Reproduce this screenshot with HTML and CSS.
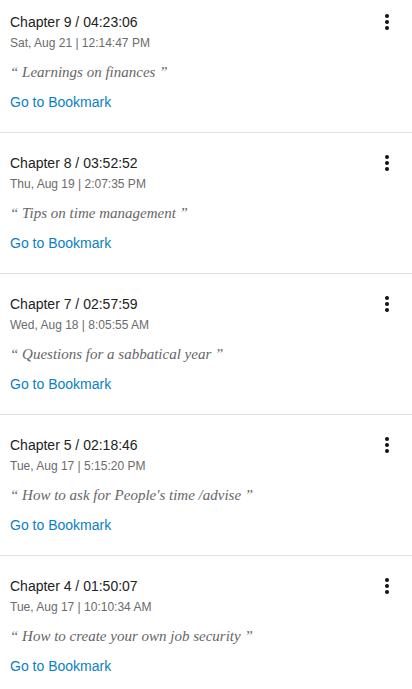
FILE: index.html
```html
<!DOCTYPE html>
<html>
<head>
<meta charset="utf-8">
<link rel="stylesheet" href="styles.css">
</head>
<body>
<ul class="list">
  <li class="item">
    <div class="head">
      <div class="title">Chapter 9 / 04:23:06</div>
      <button class="more" aria-label="More"><span></span><span></span><span></span></button>
    </div>
    <div class="date">Sat, Aug 21 | 12:14:47 PM</div>
    <div class="quote">“ Learnings on finances ”</div>
    <a class="link" href="#">Go to Bookmark</a>
  </li>
  <li class="item">
    <div class="head">
      <div class="title">Chapter 8 / 03:52:52</div>
      <button class="more" aria-label="More"><span></span><span></span><span></span></button>
    </div>
    <div class="date">Thu, Aug 19 | 2:07:35 PM</div>
    <div class="quote">“ Tips on time management ”</div>
    <a class="link" href="#">Go to Bookmark</a>
  </li>
  <li class="item">
    <div class="head">
      <div class="title">Chapter 7 / 02:57:59</div>
      <button class="more" aria-label="More"><span></span><span></span><span></span></button>
    </div>
    <div class="date">Wed, Aug 18 | 8:05:55 AM</div>
    <div class="quote">“ Questions for a sabbatical year ”</div>
    <a class="link" href="#">Go to Bookmark</a>
  </li>
  <li class="item">
    <div class="head">
      <div class="title">Chapter 5 / 02:18:46</div>
      <button class="more" aria-label="More"><span></span><span></span><span></span></button>
    </div>
    <div class="date">Tue, Aug 17 | 5:15:20 PM</div>
    <div class="quote">“ How to ask for People's time /advise ”</div>
    <a class="link" href="#">Go to Bookmark</a>
  </li>
  <li class="item">
    <div class="head">
      <div class="title">Chapter 4 / 01:50:07</div>
      <button class="more" aria-label="More"><span></span><span></span><span></span></button>
    </div>
    <div class="date">Tue, Aug 17 | 10:10:34 AM</div>
    <div class="quote">“ How to create your own job security ”</div>
    <a class="link" href="#">Go to Bookmark</a>
  </li>
</ul>
</body>
</html>
```
FILE: styles.css
```css
html, body {
  margin: 0;
  padding: 0;
  background: #fff;
  overflow: hidden;
}
body {
  font-family: "Liberation Sans", Arial, sans-serif;
}
.list {
  list-style: none;
  margin: -8px 0 0 0;
  padding: 0;
}
.item {
  padding: 22px 0 20px 10px;
  border-bottom: 1px solid #e0e0e0;
  display: flex;
  flex-direction: column;
}
.head {
  display: flex;
  justify-content: space-between;
  align-items: flex-start;
  height: 16px;
}
.title {
  font-size: 14px;
  line-height: 16px;
  color: #222;
}
.more {
  border: 0;
  background: none;
  padding: 0;
  margin: 0 23px 0 0;
  width: 4px;
  display: flex;
  flex-direction: column;
  gap: 2px;
}
.more span {
  width: 4px;
  height: 4px;
  border-radius: 50%;
  background: #111;
}
.date {
  margin-top: 6px;
  font-size: 12px;
  line-height: 14px;
  color: #6b6b6b;
}
.quote {
  margin-top: 12px;
  font-family: "Liberation Serif", "Times New Roman", serif;
  font-style: italic;
  font-size: 15px;
  line-height: 20px;
  color: #666;
}
.link {
  margin-top: 10px;
  font-size: 14px;
  line-height: 20px;
  color: #0a7fc2;
  text-decoration: none;
  align-self: flex-start;
}
```
